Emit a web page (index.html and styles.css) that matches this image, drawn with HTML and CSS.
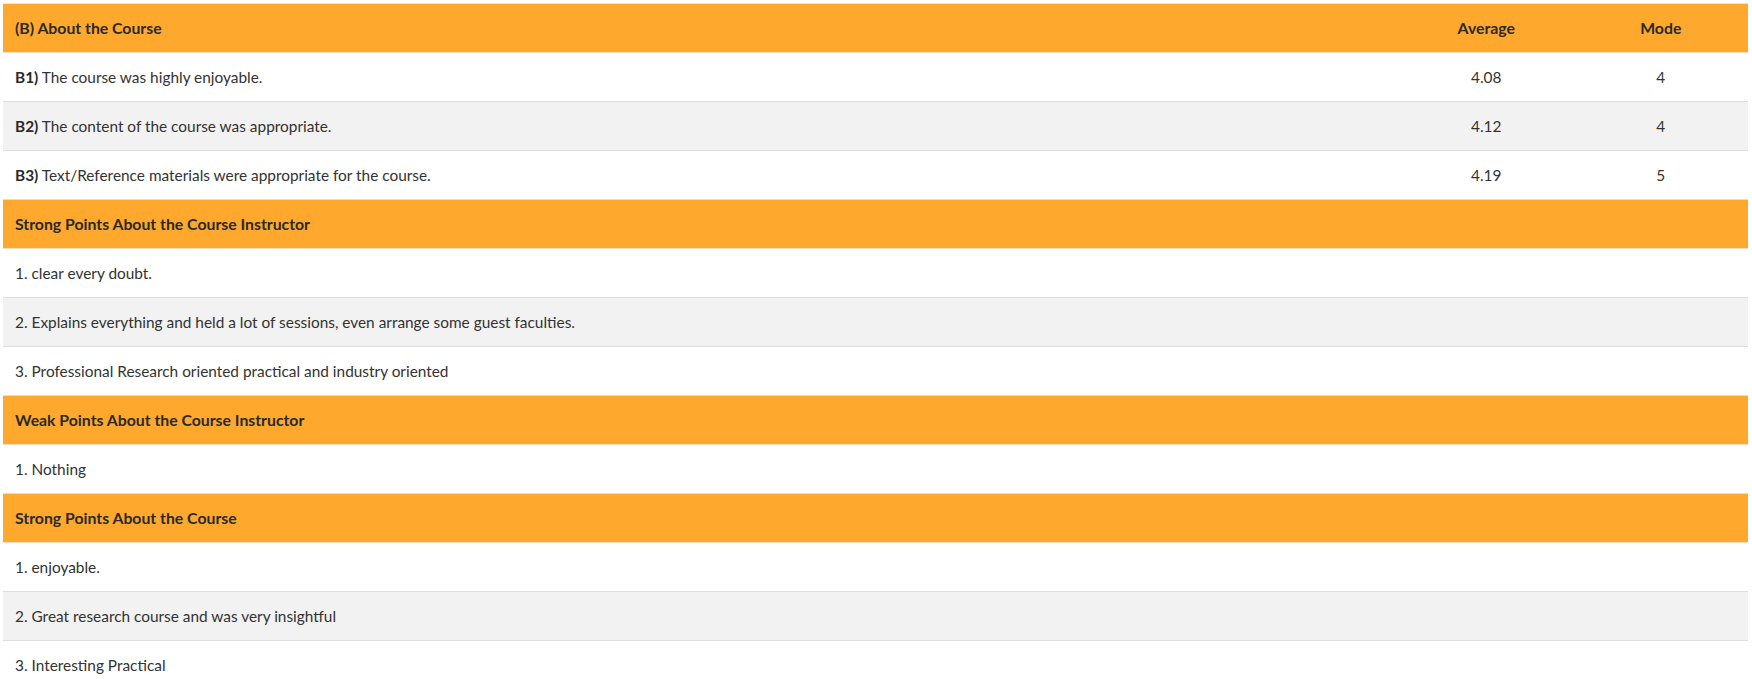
FILE: index.html
```html
<!DOCTYPE html>
<html lang="en">
<head>
  <meta charset="UTF-8">
  <title>Course Feedback</title>
  <link rel="stylesheet" href="styles.css">
</head>
<body>
  <div class="wrap">
    <table class="feedback">
      <tr class="head">
        <th>(B) About the Course</th>
        <th class="num">Average</th>
        <th class="num">Mode</th>
      </tr>
      <tr>
        <td><b>B1)</b> The course was highly enjoyable.</td>
        <td class="num">4.08</td>
        <td class="num">4</td>
      </tr>
      <tr class="alt">
        <td><b>B2)</b> The content of the course was appropriate.</td>
        <td class="num">4.12</td>
        <td class="num">4</td>
      </tr>
      <tr>
        <td><b>B3)</b> Text/Reference materials were appropriate for the course.</td>
        <td class="num">4.19</td>
        <td class="num">5</td>
      </tr>

      <tr class="head"><th colspan="3">Strong Points About the Course Instructor</th></tr>
      <tr><td colspan="3">1. clear every doubt.</td></tr>
      <tr class="alt"><td colspan="3">2. Explains everything and held a lot of sessions, even arrange some guest faculties.</td></tr>
      <tr><td colspan="3">3. Professional Research oriented practical and industry oriented</td></tr>

      <tr class="head"><th colspan="3">Weak Points About the Course Instructor</th></tr>
      <tr><td colspan="3">1. Nothing</td></tr>

      <tr class="head"><th colspan="3">Strong Points About the Course</th></tr>
      <tr><td colspan="3">1. enjoyable.</td></tr>
      <tr class="alt"><td colspan="3">2. Great research course and was very insightful</td></tr>
      <tr><td colspan="3">3. Interesting Practical</td></tr>
    </table>
  </div>
</body>
</html>
```

FILE: styles.css
```css
body { margin: 0; font-family: "Lato", "Liberation Sans", sans-serif; font-size: 15.4px; color: #333; background: #fff; }
.wrap { padding: 3px 4px 0 3px; }
.feedback { width: 100%; border-collapse: collapse; border-top: 1px solid #e6e6e6; }
.feedback th, .feedback td { padding: 12px; line-height: 24px; text-align: left; border-bottom: 1px solid #dedede; }
.feedback th { font-size: 15.8px; font-weight: 700; color: #2a2a2a; }
.feedback td b { font-weight: 700; color: #2a2a2a; }
.feedback .num { width: 10%; text-align: center; }
.head { background: #ffa82e; }
.head th { border-bottom-color: #f3dcbc; }
.alt { background: #f2f2f2; }
```
